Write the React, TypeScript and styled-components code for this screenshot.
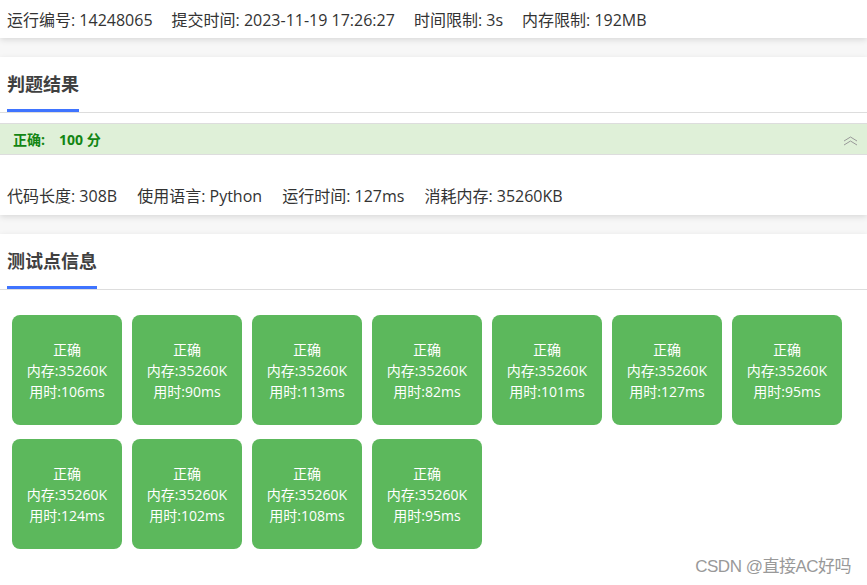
import styled, { createGlobalStyle } from "styled-components";

const GlobalStyle = createGlobalStyle`
  html, body {
    margin: 0;
    padding: 0;
    background: #f7f7f7;
    font-family: "Open Sans", "Noto Sans CJK SC", sans-serif;
    color: #333;
  }
`;

const tests = [
  { mem: "35260K", time: "106ms" },
  { mem: "35260K", time: "90ms" },
  { mem: "35260K", time: "113ms" },
  { mem: "35260K", time: "82ms" },
  { mem: "35260K", time: "101ms" },
  { mem: "35260K", time: "127ms" },
  { mem: "35260K", time: "95ms" },
  { mem: "35260K", time: "124ms" },
  { mem: "35260K", time: "102ms" },
  { mem: "35260K", time: "108ms" },
  { mem: "35260K", time: "95ms" },
];

const ChevronsUp = () => (
  <svg width="15" height="10" viewBox="0 0 15 10" fill="none">
    <path d="M1 5 L7.5 1 L14 5" stroke="#999" strokeWidth="1" />
    <path d="M1 9 L7.5 5 L14 9" stroke="#999" strokeWidth="1" />
  </svg>
);

export default function App() {
  return (
    <Page>
      <GlobalStyle />
      <Card>
        <TopLine>
          <span>运行编号: 14248065</span>
          <span>提交时间: 2023-11-19 17:26:27</span>
          <span>时间限制: 3s</span>
          <span>内存限制: 192MB</span>
        </TopLine>
      </Card>

      <Card>
        <TabHeader>
          <Tab>判题结果</Tab>
        </TabHeader>
        <ResultBar>
          <span>正确:</span>
          <span>100 分</span>
          <Toggle>
            <ChevronsUp />
          </Toggle>
        </ResultBar>
        <StatsLine>
          <span>代码长度: 308B</span>
          <span>使用语言: Python</span>
          <span>运行时间: 127ms</span>
          <span>消耗内存: 35260KB</span>
        </StatsLine>
      </Card>

      <Card $last>
        <TabHeader>
          <Tab>测试点信息</Tab>
        </TabHeader>
        <Grid>
          {tests.map((t, i) => (
            <TestBox key={i}>
              <div>正确</div>
              <div>内存:{t.mem}</div>
              <div>用时:{t.time}</div>
            </TestBox>
          ))}
        </Grid>
      </Card>

      <Watermark>CSDN @直接AC好吗</Watermark>
    </Page>
  );
}

const Page = styled.div`
  position: relative;
  width: 867px;
  height: 585px;
  overflow: hidden;
`;

const Card = styled.div<{ $last?: boolean }>`
  background: #fff;
  box-shadow: 0 2px 6px rgba(0, 0, 0, 0.12);
  margin-bottom: ${(p) => (p.$last ? "0" : "19px")};
  ${(p) => (p.$last ? "min-height: 360px;" : "")}
`;

const TopLine = styled.div`
  height: 38px;
  display: flex;
  align-items: center;
  gap: 19px;
  padding: 0 7px;
  font-size: 16px;
  color: #333;
  white-space: nowrap;
`;

const StatsLine = styled.div`
  height: 24px;
  margin-top: 28px;
  padding: 0 7px 8px;
  display: flex;
  align-items: center;
  gap: 20px;
  font-size: 16px;
  color: #333;
  white-space: nowrap;
`;

const TabHeader = styled.div`
  padding: 0 7px;
  border-bottom: 1px solid #ddd;
  height: 55px;
  display: flex;
  align-items: flex-end;
`;

const Tab = styled.div`
  height: 100%;
  box-sizing: border-box;
  border-bottom: 3px solid #3f74ff;
  font-size: 18px;
  font-weight: bold;
  color: #404040;
  display: flex;
  align-items: center;
  white-space: nowrap;
  padding-bottom: 1px;
`;

const ResultBar = styled.div`
  margin-top: 10px;
  height: 30px;
  background: #dff0d8;
  border-top: 1px solid #ddd;
  border-bottom: 1px solid #ddd;
  display: flex;
  align-items: center;
  gap: 14px;
  padding: 0 13px;
  font-size: 14px;
  font-weight: bold;
  color: #138513;
`;

const Toggle = styled.div`
  margin-left: auto;
  margin-right: -4px;
  display: flex;
  align-items: center;
  padding-top: 4px;
`;

const Grid = styled.div`
  display: grid;
  grid-template-columns: repeat(7, 110px);
  column-gap: 10px;
  row-gap: 14px;
  padding: 25px 12px 20px;
`;

const TestBox = styled.div`
  width: 110px;
  height: 110px;
  background: #5cb85c;
  border-radius: 8px;
  color: #fff;
  font-size: 14px;
  line-height: 21px;
  display: flex;
  flex-direction: column;
  align-items: center;
  justify-content: center;
`;

const Watermark = styled.div`
  position: absolute;
  right: 16px;
  bottom: 8px;
  font-size: 17px;
  color: #999;
  font-family: "Liberation Sans", "Noto Sans CJK SC", sans-serif;
  letter-spacing: -0.5px;
`;
